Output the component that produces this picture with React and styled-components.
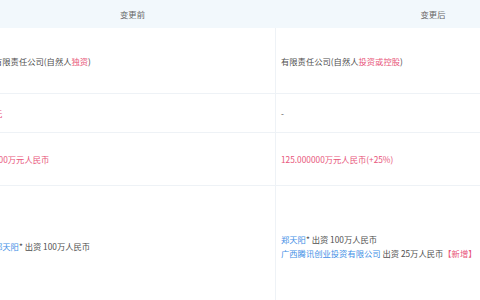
import { Fragment } from "react"
import styled, { createGlobalStyle } from "styled-components"

const Global = createGlobalStyle`
    html, body {
        margin: 0;
        padding: 0;
        background: #fff;
        overflow: hidden;
    }
    * { box-sizing: border-box; }
`

const Table = styled.div`
    display: grid;
    grid-template-columns: 287px 314px;
    margin-left: -11px;
    width: 601px;
    font-family: "Noto Sans CJK SC", "Noto Sans", sans-serif;
    font-size: 8.3px;
    color: #505050;
`

const HeadCell = styled.div`
    height: 28px;
    display: flex;
    align-items: center;
    justify-content: center;
    background: #f2f8fc;
    color: #666;
`

const Cell = styled.div`
    height: ${props => props.h}px;
    display: flex;
    flex-direction: column;
    justify-content: center;
    padding: 0 5px;
    line-height: 14px;
    white-space: nowrap;
    border-bottom: 1px solid #eef2f6;
    border-right: ${props => props.left ? "1px solid #eef2f6" : "none"};
`

const Line = styled.div``

const Red = styled.span`
    color: #e8557a;
`

const Blue = styled.span`
    color: #3f8fe6;
`

const rows = [
    {
        h: 66,
        before: [<>有限责任公司(自然人<Red>独资</Red>)</>],
        after: [<>有限责任公司(自然人<Red>投资或控股</Red>)</>]
    },
    { h: 39, before: [<Red>无</Red>], after: ["-"] },
    { h: 53, before: [<Red>100万元人民币</Red>], after: [<Red>125.000000万元人民币(+25%)</Red>] },
    {
        h: 120,
        before: [<><Blue>郑天阳</Blue>* 出资 100万人民币</>],
        after: [
            <><Blue>郑天阳</Blue>* 出资 100万人民币</>,
            <><Blue>广西腾讯创业投资有限公司</Blue> 出资 25万人民币<Red>【新增】</Red></>
        ]
    },
]

const App = () => {
    return (
        <>
            <Global />
            <Table>
                <HeadCell>变更前</HeadCell>
                <HeadCell>变更后</HeadCell>
                {rows.map((r, i) => (
                    <Fragment key={i}>
                        <Cell h={r.h} left>
                            {r.before.map((l, j) => <Line key={j}>{l}</Line>)}
                        </Cell>
                        <Cell h={r.h}>
                            {r.after.map((l, j) => <Line key={j}>{l}</Line>)}
                        </Cell>
                    </Fragment>
                ))}
            </Table>
        </>
    )
}

export default App
